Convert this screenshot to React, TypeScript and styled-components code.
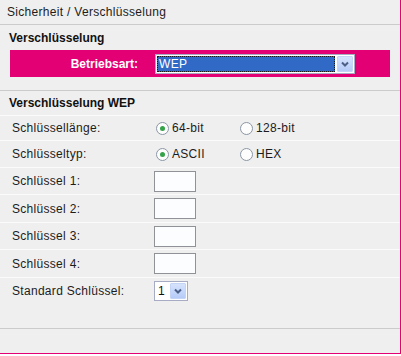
import React from 'react';
import styled, { createGlobalStyle } from 'styled-components';

const GlobalStyle = createGlobalStyle`
  body {
    margin: 0;
    background: #ffffff;
    font-family: "Liberation Sans", Arial, sans-serif;
    font-size: 12px;
    letter-spacing: 0.3px;
    color: #1c1c1c;
  }
`

const Frame = styled.div`
  width: 400px;
  height: 353px;
  background: #efefef;
  border-right: 1px solid #e20074;
  border-bottom: 1px solid #e20074;
  display: flex;
  flex-direction: column;
`

const TitleBar = styled.div`
  height: 24px;
  padding-left: 7px;
  display: flex;
  align-items: center;
  border-bottom: 1px solid #cbcbcb;
`

const SectionHeading = styled.div<{ $height: number }>`
  height: ${p => p.$height}px;
  padding-left: 9px;
  display: flex;
  align-items: center;
  font-weight: bold;
  font-size: 12px;
  letter-spacing: 0;
  color: #111;
`

const ModeBar = styled.div`
  margin: 0 10px;
  height: 27px;
  background: #e20074;
  display: flex;
  align-items: center;
`

const ModeLabel = styled.span`
  width: 128px;
  margin-right: 17px;
  text-align: right;
  color: #ffffff;
  font-weight: bold;
  letter-spacing: 0;
`

const SelectBox = styled.div<{ $width: number }>`
  width: ${p => p.$width}px;
  height: 20px;
  box-sizing: border-box;
  border: 1px solid #a5acc4;
  background: #ffffff;
  display: flex;
  align-items: stretch;
  padding: 1px;
  gap: 2px;
`

const SelectValue = styled.div<{ $active?: boolean }>`
  flex: 1;
  display: flex;
  align-items: center;
  padding-left: 2px;
  box-sizing: border-box;
  background: ${p => (p.$active ? '#3169c6' : '#ffffff')};
  color: ${p => (p.$active ? '#ffffff' : '#111')};
  outline: ${p => (p.$active ? '1px dotted #1a1a1a' : 'none')};
  outline-offset: -1px;
  font-size: 12px;
`

const ArrowButton = styled.div`
  width: 16px;
  background: linear-gradient(#d6e3fd, #b5cbf7);
  border: 1px solid #c4d4f6;
  border-radius: 1px;
  box-sizing: border-box;
  display: flex;
  align-items: center;
  justify-content: center;
`

const Divider = styled.div<{ $top: number }>`
  margin-top: ${p => p.$top}px;
  border-top: 1px solid #cbcbcb;
`

const Row = styled.div<{ $height: number }>`
  height: ${p => p.$height}px;
  border-top: 1px solid #fbfbfb;
  display: flex;
  align-items: center;
  padding-left: 12px;
`

const RowLabel = styled.span`
  width: 142px;
  flex-shrink: 0;
`

const RadioOption = styled.label`
  width: 82px;
  display: flex;
  align-items: center;
  gap: 3px;
  padding-left: 2px;
`

const RadioCircle = styled.span<{ $checked?: boolean }>`
  width: 11px;
  height: 11px;
  border-radius: 50%;
  border: 1px solid #8a97a6;
  background: #fdfdfd;
  display: flex;
  align-items: center;
  justify-content: center;

  &::after {
    content: '';
    width: 5px;
    height: 5px;
    border-radius: 50%;
    background: ${p => (p.$checked ? '#35a24a' : 'transparent')};
  }
`

const KeyInput = styled.div`
  width: 42px;
  height: 21px;
  box-sizing: border-box;
  border: 1px solid #8f9296;
  background: #fcfdff;
`

const Filler = styled.div`
  flex: 1;
`

const Footer = styled.div`
  height: 24px;
  border-top: 1px solid #cbcbcb;
`

const Chevron = () => (
  <svg width="8" height="6" viewBox="0 0 8 6">
    <polyline points="1,1.5 4,4.5 7,1.5" fill="none" stroke="#4c5f86" strokeWidth="2" />
  </svg>
)

function Radio({ label, checked }: { label: string; checked?: boolean }) {
  return (
    <RadioOption>
      <RadioCircle $checked={checked} />
      <span>{label}</span>
    </RadioOption>
  )
}

const keyRows = [
  { label: 'Schlüssel 1:', height: 26 },
  { label: 'Schlüssel 2:', height: 27 },
  { label: 'Schlüssel 3:', height: 26 },
  { label: 'Schlüssel 4:', height: 27 },
]

function App() {
  return (
    <Frame>
      <GlobalStyle />
      <TitleBar>Sicherheit / Verschlüsselung</TitleBar>
      <SectionHeading $height={25}>Verschlüsselung</SectionHeading>
      <ModeBar>
        <ModeLabel>Betriebsart:</ModeLabel>
        <SelectBox $width={200}>
          <SelectValue $active>WEP</SelectValue>
          <ArrowButton><Chevron /></ArrowButton>
        </SelectBox>
      </ModeBar>
      <Divider $top={13} />
      <SectionHeading $height={24}>Verschlüsselung WEP</SectionHeading>
      <Row $height={24}>
        <RowLabel>Schlüssellänge:</RowLabel>
        <Radio label="64-bit" checked />
        <Radio label="128-bit" />
      </Row>
      <Row $height={26}>
        <RowLabel>Schlüsseltyp:</RowLabel>
        <Radio label="ASCII" checked />
        <Radio label="HEX" />
      </Row>
      {keyRows.map(r => (
        <Row key={r.label} $height={r.height}>
          <RowLabel>{r.label}</RowLabel>
          <KeyInput />
        </Row>
      ))}
      <Row $height={26}>
        <RowLabel>Standard Schlüssel:</RowLabel>
        <SelectBox $width={34}>
          <SelectValue>1</SelectValue>
          <ArrowButton><Chevron /></ArrowButton>
        </SelectBox>
      </Row>
      <Filler />
      <Footer />
    </Frame>
  );
}

export default App;
